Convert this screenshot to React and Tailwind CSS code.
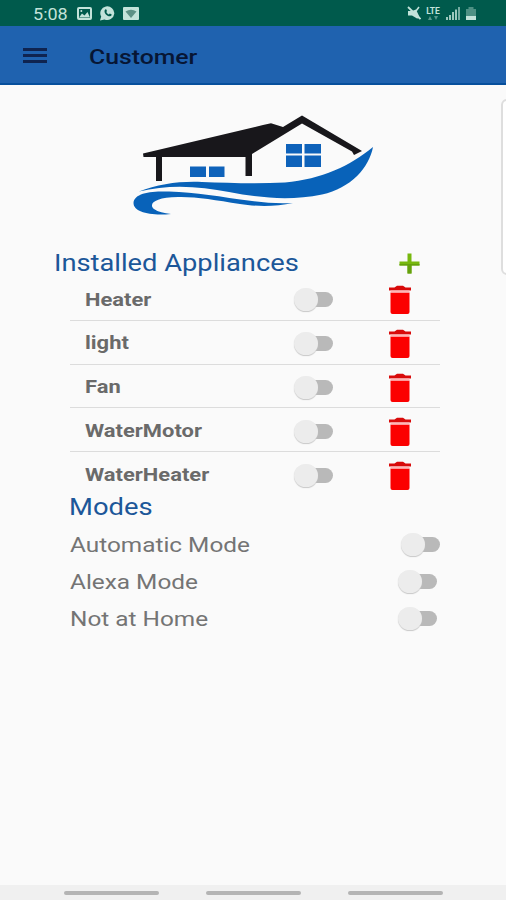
import { useState } from 'react'

const APPLIANCES = ['Heater', 'light', 'Fan', 'WaterMotor', 'WaterHeater']

const MODES = [
  { name: 'Automatic Mode', inset: 'mr-[66px]' },
  { name: 'Alexa Mode', inset: 'mr-[69px]' },
  { name: 'Not at Home', inset: 'mr-[69px]' },
]

function StatusBar() {
  return (
    <header className="flex h-[26px] shrink-0 items-center bg-[#005a4c] pl-[33px] pr-[30px] text-[#c3e3da]">
      <span className="w-[44px] whitespace-nowrap pt-[2px] text-[17px] leading-[26px]">
        <span className="inline-block origin-left scale-x-[1.06]">5:08</span>
      </span>
      {/* gallery */}
      <svg className="h-[13px] w-[15px]" viewBox="0 0 15 13">
        <rect x="1" y="1" width="13" height="11" rx="1" fill="none" stroke="currentColor" strokeWidth="2" />
        <path d="M2 10.500l3-4 2.500 2 3-3.500 2.500 5.500z" fill="currentColor" />
        <circle cx="4.300" cy="4" r="1" fill="currentColor" />
      </svg>
      {/* whatsapp */}
      <svg className="ml-[7px] h-[15px] w-[17px]" viewBox="0 0 17 15">
        <path d="M1 14.500l1.200-4A7 6.800 0 1 1 5.500 13.400z" fill="currentColor" />
        <path d="M5.800 4c.5-.8 1.300-.8 1.600-.2l.6 1.300-.7 1c.6 1.200 1.400 1.900 2.500 2.300l1-.9 1.700.8c.4.500-.2 1.900-1.500 2-3 .2-6.500-3.300-5.200-6.300z" fill="#005a4c" />
      </svg>
      {/* wifi in a box */}
      <svg className="ml-[7px] h-[13px] w-[16px]" viewBox="0 0 16 13">
        <rect width="16" height="13" rx="1" fill="currentColor" />
        <path d="M2.500 4.500q5.500-3.500 11 0L8 11z" fill="#5d9186" />
      </svg>
      <div className="flex-1" />
      {/* muted */}
      <svg className="h-[14px] w-[14px]" viewBox="0 0 14 14">
        <path d="M1 5h4l4-1.500L13 12l-3 .5L5 9.500H1z" fill="currentColor" />
        <path d="M1 1l12.500 12" stroke="currentColor" strokeWidth="1.800" />
        <path d="M9 5l3-4" stroke="currentColor" strokeWidth="1.500" />
      </svg>
      <div className="ml-[4px] flex w-[16px] flex-col items-center">
        <span className="text-[8.500px] font-bold leading-[8px]">LTE</span>
        <svg className="mt-[1px] h-[4px] w-[10px] opacity-45" viewBox="0 0 10 4">
          <path d="M0 4l2-4 2 4zM6 0h4L8 4z" fill="currentColor" />
        </svg>
      </div>
      <svg className="ml-[5px] h-[14px] w-[14px]" viewBox="0 0 14 14">
        <path d="M0 11h2v3H0zM3 9h2v5H3zM6 6h2v8H6zM9 3.500h2V14H9z" fill="currentColor" opacity=".8" />
        <path d="M12 1h2v13h-2z" fill="currentColor" opacity=".6" />
      </svg>
      <svg className="ml-[6px] h-[13px] w-[10px]" viewBox="0 0 10 13">
        <path d="M0 2h2.500V0h5v2H10v7H0z" fill="currentColor" opacity=".4" />
        <path d="M0 9h10v4H0z" fill="currentColor" />
      </svg>
    </header>
  )
}

function AppBar() {
  return (
    <div className="flex h-[59px] shrink-0 items-center border-b-2 border-[#074f9c] bg-[#1f62af] pl-[23px] pt-[2px]">
      <button aria-label="Menu" className="flex w-[24px] flex-col gap-[3px]">
        <span className="h-[3px] bg-[#0f2450]" />
        <span className="h-[3px] bg-[#0f2450]" />
        <span className="h-[3px] bg-[#0f2450]" />
      </button>
      <h1 className="ml-[42px] origin-left scale-x-[1.18] pt-[4px] text-[21px] font-medium text-[#071634]">Customer</h1>
    </div>
  )
}

function Logo() {
  return (
    <svg className="h-[104px] w-[244px]" viewBox="131 113 244 104">
      <path d="M143 153.500L263 125l8-1.800 12 3.800 19-11.500 60 35.500-8 4-2-3.500-50-28L252 154v22h-6.500v-19H162v24h-6v-24h-12.500z" fill="#18171b" />
      <path d="M190 166.500h16v10.500h-16zM209 166.500h15.500v10.500H209z" fill="#0e62ba" />
      <path d="M286 144h16v9.500h-16zM304.500 144H321v9.500h-16.500zM286 155.500h16V167h-16zM304.500 155.500H321V167h-16.500z" fill="#0e62ba" />
      <path d="M139 191.500C158 184 180 181 202 182C228 183 258 184 285 182.500C322 179 350 166 373 147C369 168 351 188 322 194.500C290 201 260 198 229 192C200 186 168 184 139 191.500z" fill="#0862b9" />
      <path d="M171 214C150 216 133.500 212 133.500 203C134 193 151 191 169 191.500C196 192 220 197 252 201C266 203 278 203.500 293 203C275 207 255 206.500 240 204C215 200 195 196.500 178 197C155 197 148 204 154 209C158 212 164 213 171 214z" fill="#0862b9" />
    </svg>
  )
}

function Switch({ label }) {
  const [on, setOn] = useState(false)
  return (
    <button role="switch" aria-checked={on} aria-label={label} onClick={() => setOn(!on)}
      className={`flex h-[24px] w-[39px] shrink-0 items-center ${on ? 'flex-row-reverse' : ''}`}>
      <span className="z-10 h-[23px] w-[24px] shrink-0 rounded-full bg-[#ececec] shadow-[0_1px_1px_#c8c8c8]" />
      <span className="-ml-[10px] h-[15px] w-[25px] shrink-0 rounded-r-full bg-[#b9b9b9]" />
    </button>
  )
}

function TrashIcon() {
  return (
    <svg className="h-[30px] w-[22px]" viewBox="0 0 22 30">
      <path d="M0 2.500h5.500L8 .8h6l2.500 1.700H22v3H0z" fill="#d80a0a" />
      <path d="M1.500 7.500h19v19.500a2 2 0 0 1-2 2h-15a2 2 0 0 1-2-2z" fill="#fb0000" />
      <path d="M1.500 5.500h19v2h-19z" fill="#ffb5b5" />
    </svg>
  )
}

function ApplianceRow({ name, last }) {
  return (
    <li className={`flex h-[43.800px] items-center pl-[15px] ${last ? '' : 'border-b-[1.500px] border-[#dcdcdc]'}`}>
      <span className="w-[209px] pt-[2.500px] text-[18.500px] font-bold leading-[24px] text-[#6a6a6a]">
        <span className="inline-block origin-left scale-x-[1.185]">{name}</span>
      </span>
      <span className="mt-[3px]"><Switch label={name} /></span>
      <button aria-label={`Delete ${name}`} className="ml-[56px] mt-[4px]"><TrashIcon /></button>
    </li>
  )
}

export default function App() {
  return (
    <div className="relative flex h-[900px] w-[506px] flex-col overflow-hidden bg-[#fafafa] font-['Roboto','Liberation_Sans',sans-serif]">
      <StatusBar />
      <AppBar />
      <main className="flex flex-1 flex-col">
        <div className="mt-[28px] flex justify-center"><Logo /></div>
        <div className="mt-[30px] flex h-[30px] items-center pl-[54px]">
          <h2 className="w-[345px] pt-[2px] text-[24px] leading-[30px] text-[#1c5799]">
            <span className="inline-block origin-left scale-x-[1.137]">Installed Appliances</span>
          </h2>
          <button aria-label="Add appliance" className="mt-[3px]">
            <svg className="h-[21px] w-[21px]" viewBox="0 0 21 21">
              <path d="M8.500.5h4v8h8v4h-8v8h-4v-8h-8v-4h8z" fill="#77b80e" />
              <path d="M8.500 12.500v8h4v-8h8v-1.500H.5v1.500z" fill="#65a00e" />
            </svg>
          </button>
        </div>
        <ul className="ml-[70px] w-[370px]">
          {APPLIANCES.map((name, i) => (
            <ApplianceRow key={name} name={name} last={i === APPLIANCES.length - 1} />
          ))}
        </ul>
        <h2 className="ml-[69px] mt-[-4px] h-[30px] text-[24px] leading-[30px] text-[#1c5799]">
          <span className="inline-block origin-left scale-x-[1.140]">Modes</span>
        </h2>
        <ul className="mt-[4px]">
          {MODES.map((mode) => (
            <li key={mode.name} className="flex h-[37px] items-center justify-between pl-[70px]">
              <span className="inline-block origin-left scale-x-[1.160] pt-[2px] text-[21px] text-[#747474]">{mode.name}</span>
              <span className={mode.inset}><Switch label={mode.name} /></span>
            </li>
          ))}
        </ul>
      </main>
      {/* edge panel handle */}
      <div className="absolute right-[-10px] top-[99px] h-[176px] w-[15px] rounded-l-[6px] border-2 border-[#dedede] bg-white" />
      <nav className="flex h-[15px] shrink-0 items-center bg-[#f0f0f0] pl-[64px]">
        <span className="h-[4px] w-[95px] rounded-full bg-[#b4b4b4]" />
        <span className="ml-[47px] h-[4px] w-[95px] rounded-full bg-[#b4b4b4]" />
        <span className="ml-[47px] h-[4px] w-[95px] rounded-full bg-[#b4b4b4]" />
      </nav>
    </div>
  )
}
